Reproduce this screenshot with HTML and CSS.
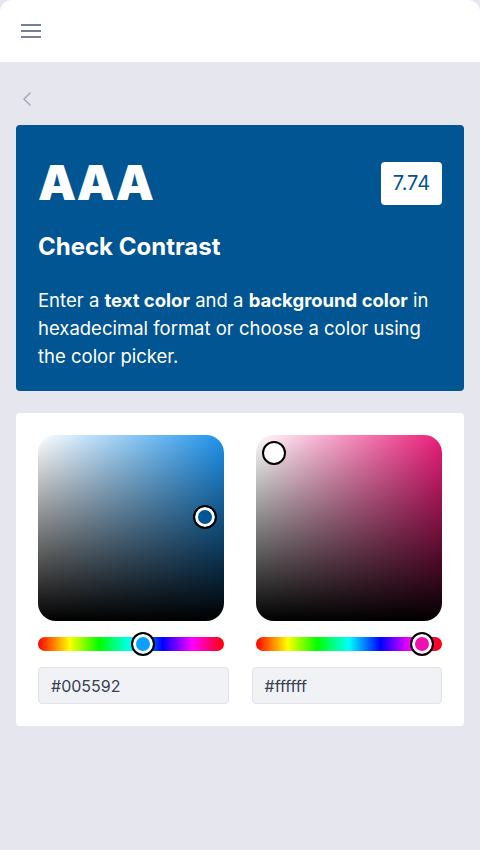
FILE: index.html
```html
<!DOCTYPE html>
<html lang="en">
<head>
<meta charset="utf-8">
<title>Check Contrast</title>
<link rel="stylesheet" href="styles.css">
</head>
<body>
<header class="topbar">
  <button class="menu-btn" aria-label="Menu">
    <svg width="20" height="14" viewBox="0 0 20 14"><path d="M0 1h20M0 7h20M0 13h20" stroke="#4a5670" stroke-width="1.6" fill="none"/></svg>
  </button>
</header>
<main class="content">
  <a class="back" aria-label="Back">
    <svg width="10" height="14" viewBox="0 0 10 14"><path d="M8 1L2 7l6 6" stroke="#a3adc0" stroke-width="1.6" fill="none" stroke-linecap="round" stroke-linejoin="round"/></svg>
  </a>
  <section class="result">
    <div class="result-head">
      <h1 class="rating">AAA</h1>
      <div class="ratio">7.74</div>
    </div>
    <h2 class="result-title">Check Contrast</h2>
    <p class="result-text">Enter a <strong>text color</strong> and a <strong>background color</strong> in hexadecimal format or choose a color using the color picker.</p>
  </section>
  <section class="pickers">
    <div class="picker">
      <div class="sv sv-left">
        <span class="thumb sv-thumb" style="left:167px;top:82px;background:#005592"></span>
      </div>
      <div class="hue">
        <span class="thumb hue-thumb" style="left:105px;background:#0aa0ff"></span>
      </div>
      <div class="hex">#005592</div>
    </div>
    <div class="picker picker-right">
      <div class="sv sv-right">
        <span class="thumb sv-thumb" style="left:18px;top:18px;background:#ffffff"></span>
      </div>
      <div class="hue">
        <span class="thumb hue-thumb" style="left:166px;background:#f010b0"></span>
      </div>
      <div class="hex">#ffffff</div>
    </div>
  </section>
</main>
</body>
</html>
```
FILE: styles.css
```css
* { box-sizing: border-box; }
html, body { margin: 0; padding: 0; }
body {
  background: #e6e6ee;
  font-family: Inter, "Noto Sans", sans-serif;
  color: #1f2937;
  min-height: 850px;
}
.topbar {
  height: 62px;
  background: #fff;
  border-radius: 12px 12px 0 0;
  display: flex;
  align-items: center;
  padding-left: 21px;
}
.menu-btn {
  border: 0;
  background: none;
  padding: 0;
  display: flex;
}
.content {
  padding: 0 16px;
}
.back {
  display: flex;
  height: 63px;
  align-items: center;
  padding-left: 6px;
  padding-top: 10px;
}
.result {
  background: #005592;
  color: #fff;
  border-radius: 4px;
  padding: 30px 22px 21px;
}
.result-head {
  display: flex;
  justify-content: space-between;
  align-items: center;
}
.rating {
  margin: 0;
  font-size: 48px;
  line-height: 56px;
  font-weight: 900;
  letter-spacing: 0;
}
.ratio {
  background: #fff;
  color: #005592;
  border-radius: 4px;
  font-size: 20px;
  line-height: 43px;
  width: 61px;
  text-align: center;
}
.result-title {
  margin: 20px 0 0;
  font-size: 24px;
  line-height: 32px;
  font-weight: 700;
}
.result-text {
  margin: 23px 0 0;
  font-size: 18.5px;
  line-height: 28px;
  font-weight: 400;
}
.result-text strong { font-weight: 700; }
.pickers {
  margin-top: 22px;
  background: #fff;
  border-radius: 4px;
  padding: 22px;
  display: grid;
  grid-template-columns: 1fr 1fr;
  column-gap: 23px;
}
.picker {
  display: flex;
  flex-direction: column;
  align-items: flex-start;
}
.picker-right { align-items: flex-end; }
.sv {
  position: relative;
  width: 186px;
  height: 186px;
  border-radius: 18px;
}
.sv-left {
  background:
    linear-gradient(to bottom, rgba(0,0,0,0), #000),
    linear-gradient(to right, #fff, hsl(206, 85%, 52%));
}
.sv-right {
  background:
    linear-gradient(to bottom, rgba(0,0,0,0), #000),
    linear-gradient(to right, #fff, hsl(333, 85%, 52%));
}
.thumb {
  position: absolute;
  width: 24px;
  height: 24px;
  border-radius: 50%;
  border: 2px solid #000;
  box-shadow: inset 0 0 0 3px #fff;
  transform: translate(-50%, -50%);
}
.hue {
  position: relative;
  margin-top: 16px;
  width: 186px;
  height: 14px;
  border-radius: 7px;
  background: linear-gradient(to right, #ff0000 0%, #ffff00 17%, #00ff00 33%, #00ffff 50%, #0000ff 67%, #ff00ff 83%, #ff0000 100%);
}
.hue-thumb { top: 7px; }
.hex {
  margin-top: 16px;
  width: 100%;
  height: 37px;
  background: #f1f2f6;
  border: 1px solid #e2e4ea;
  border-radius: 4px;
  padding: 0 12px;
  display: flex;
  align-items: center;
  font-size: 16px;
  color: #374151;
}
```
